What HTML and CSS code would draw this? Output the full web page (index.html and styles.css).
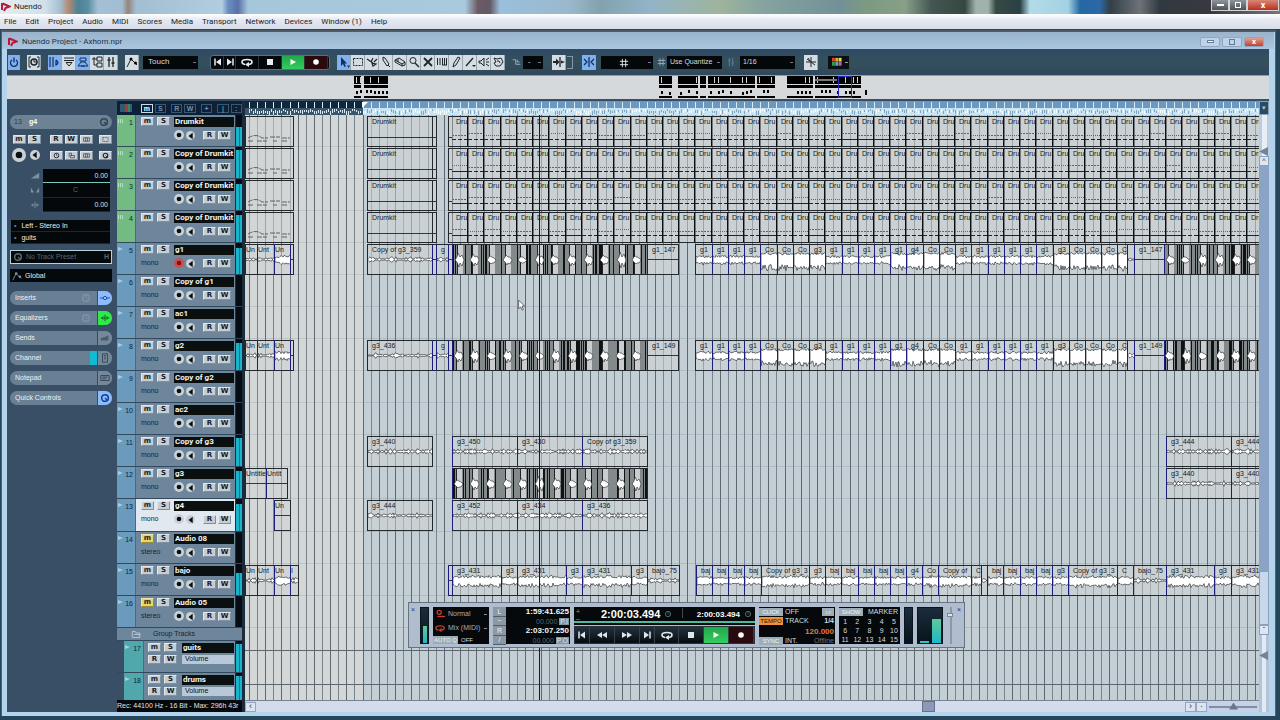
FILE: index.html
```html
<!DOCTYPE html>
<html lang="en">
<head>
<meta charset="utf-8">
<title>Nuendo</title>
<link rel="stylesheet" href="styles.css">
</head>
<body>
<svg class="sprite" aria-hidden="true">
  <symbol id="logo" viewBox="0 0 10 10"><path d="M1 1v7M1.500 1.500l7 3-4 1.500-1.500 3" fill="none" stroke="#b8183c" stroke-width="2"/></symbol>
  <symbol id="power" viewBox="0 0 12 12"><path d="M4 4a3.500 3.500 0 1 0 4 0M6 1.500v5" fill="none" stroke="currentColor" stroke-width="1.300"/></symbol>
  <symbol id="clock" viewBox="0 0 12 12"><path d="M3 1H1v10h2M9 1h2v10H9" fill="none" stroke="currentColor"/><circle cx="6" cy="6" r="3" fill="none" stroke="currentColor" stroke-width="1.500"/><path d="M6 4v2h2" fill="none" stroke="currentColor"/></symbol>
  <symbol id="inspector" viewBox="0 0 12 12"><path d="M1 1v10M4 1v10M7 4v5q4-2 0-5" fill="none" stroke="currentColor" stroke-width="1.200"/></symbol>
  <symbol id="info" viewBox="0 0 12 12"><path d="M1 2h10M1 4.500h10M3 6.500h6L6 10z" fill="none" stroke="currentColor"/></symbol>
  <symbol id="over" viewBox="0 0 12 12"><path d="M3 2h6v3H3zM1 10l3-4h4l3 4zM4 10h4" fill="none" stroke="currentColor"/></symbol>
  <symbol id="pool" viewBox="0 0 12 12"><path d="M6 1h5v4H6zM6 7h5v4H6zM3 1v8h3M1 3h5" fill="none" stroke="currentColor"/></symbol>
  <symbol id="mixer" viewBox="0 0 12 12"><path d="M4 1v10M8 1v10M2.500 4h3M6.500 7h3" fill="none" stroke="currentColor" stroke-width="1.300"/></symbol>
  <symbol id="auto" viewBox="0 0 12 12"><path d="M1 11L5 3l6 6" fill="none" stroke="currentColor"/><circle cx="5" cy="3" r="1.500"/><circle cx="9.500" cy="7" r="1.500"/></symbol>
  <symbol id="prev" viewBox="0 0 12 12"><path d="M3 2.500v7" stroke="currentColor" stroke-width="1.500"/><path d="M9 2.500v7L4 6z" fill="currentColor"/></symbol>
  <symbol id="next" viewBox="0 0 12 12"><path d="M9 2.500v7" stroke="currentColor" stroke-width="1.500"/><path d="M3 2.500v7L8 6z" fill="currentColor"/></symbol>
  <symbol id="rew" viewBox="0 0 12 12"><path d="M6 3v6L1 6zM11 3v6L6 6z" fill="currentColor"/></symbol>
  <symbol id="fwd" viewBox="0 0 12 12"><path d="M1 3v6l5-3zM6 3v6l5-3z" fill="currentColor"/></symbol>
  <symbol id="loop" viewBox="0 0 12 12"><path d="M4 8.500Q1 8 1 6q0-2.500 5-2.500T11 6q0 2-3 2.500" fill="none" stroke="currentColor" stroke-width="1.600"/><path d="M4 8.500l4-2.500v5z" fill="currentColor"/></symbol>
  <symbol id="stop" viewBox="0 0 12 12"><path d="M3 3h6v6H3z" fill="currentColor"/></symbol>
  <symbol id="play" viewBox="0 0 12 12"><path d="M3.500 3v6L9 6z" fill="currentColor"/></symbol>
  <symbol id="rec" viewBox="0 0 12 12"><circle cx="6" cy="6" r="2.800" fill="currentColor"/></symbol>
  <symbol id="arrow" viewBox="0 0 12 12"><path d="M3 1v9l2-2 1.500 3 1.500-.700L6.500 7.500H9z" fill="currentColor"/><path d="M9 9.500h3L10.500 12z" fill="currentColor"/></symbol>
  <symbol id="range" viewBox="0 0 12 12"><path d="M1.500 2.500h9v7h-9z" fill="none" stroke="currentColor" stroke-dasharray="2 1"/></symbol>
  <symbol id="split" viewBox="0 0 12 12"><path d="M1 3l6 4M7 2L5 6M6 7l4 1-3 2zM8 6l3-3" fill="none" stroke="currentColor" stroke-width="1.200"/></symbol>
  <symbol id="glue" viewBox="0 0 12 12"><path d="M3 1l2 1 4 6-2 2-4-6zM8 9l2 2" fill="none" stroke="currentColor"/></symbol>
  <symbol id="eraser" viewBox="0 0 12 12"><path d="M1 4l4-2 6 4v3l-3 1-7-4zM1 4l7 4 3-2M8 8v2M4 3v3" fill="none" stroke="currentColor"/></symbol>
  <symbol id="zoom" viewBox="0 0 12 12"><circle cx="5" cy="4.500" r="3" fill="none" stroke="currentColor"/><path d="M7 7l4 4" stroke="currentColor" stroke-width="1.500"/></symbol>
  <symbol id="mute" viewBox="0 0 12 12"><path d="M2 2l8 8M10 2l-8 8" stroke="currentColor" stroke-width="1.800"/></symbol>
  <symbol id="warp" viewBox="0 0 12 12"><path d="M1.500 2v7M4 2v7M6.500 2v7M8.500 2v7M10.500 2v7M6 9h5" stroke="currentColor"/></symbol>
  <symbol id="pencil" viewBox="0 0 12 12"><path d="M8 1l2 1-4 7-3 2 1-4z" fill="none" stroke="currentColor"/></symbol>
  <symbol id="line" viewBox="0 0 12 12"><path d="M2 10l7-8" stroke="currentColor" stroke-width="1.300"/><path d="M8 9h4l-2 2z" fill="currentColor"/></symbol>
  <symbol id="speaker" viewBox="0 0 12 12"><path d="M1 5h2l3-3v8L3 7H1zM8 4l3-2M8 6h3M8 8l3 2" fill="none" stroke="currentColor"/></symbol>
  <symbol id="palette" viewBox="0 0 12 12"><path d="M2 2l3 1 4-1 2 4-3 4H4L2 7l2-1zM5 5h2l1 2" fill="none" stroke="currentColor"/></symbol>
  <symbol id="snap" viewBox="0 0 12 12"><path d="M1 3h4v6h6M7 3v3h3" fill="none" stroke="currentColor" stroke-width="1.200"/></symbol>
  <symbol id="scroll" viewBox="0 0 12 12"><path d="M0 5h3V2.500L6.500 6 3 9.500V7H0z" fill="currentColor"/><path d="M7 1v10" stroke="currentColor" stroke-width="1.300"/><path d="M8 4.500L12 6 8 7.500z" fill="currentColor"/></symbol>
  <symbol id="magnet" viewBox="0 0 12 12"><path d="M6 1v10M1 3l3 3-3 3M11 3L8 6l3 3" fill="none" stroke="currentColor" stroke-width="1.300"/></symbol>
  <symbol id="zero" viewBox="0 0 12 12"><path d="M6 1v10M1 6h10M2 3l8 6M3 2l2 3" fill="none" stroke="currentColor"/></symbol>
  <symbol id="grid" viewBox="0 0 12 12"><path d="M4 1v10M8 1v10M1 4h10M1 8h10" stroke="currentColor"/></symbol>
  <symbol id="pal" viewBox="0 0 12 12"><path d="M0 1h3.500v4.500H0z" fill="#d8462a"/><path d="M4 1h3.500v4.500H4z" fill="#e8a830"/><path d="M8 1h3.500v4.500H8z" fill="#e8dc40"/><path d="M0 6h3.500v4.500H0z" fill="#3a9a48"/><path d="M4 6h3.500v4.500H4z" fill="#48b0d8"/><path d="M8 6h3.500v4.500H8z" fill="#c85a9a"/></symbol>
  <symbol id="mon" viewBox="0 0 12 12"><path d="M8 2v8L3 6z" fill="currentColor"/></symbol>
  <symbol id="ring" viewBox="0 0 12 12"><circle cx="6" cy="6" r="4" fill="none" stroke="currentColor" stroke-width="1.500"/><path d="M6 3v3l2 1" fill="none" stroke="currentColor"/></symbol>
  <symbol id="lock" viewBox="0 0 12 12"><path d="M4 6h7v4H4zM2 8V2h4v4" fill="none" stroke="currentColor"/></symbol>
  <symbol id="lanes" viewBox="0 0 12 12"><path d="M1 3h10v6H1zM4.500 3v6M7.500 3v6" fill="none" stroke="currentColor"/></symbol>
  <symbol id="insert" viewBox="0 0 12 12"><path d="M0 6h12" stroke="currentColor"/><circle cx="6" cy="6" r="2" fill="#9cc4ff" stroke="currentColor"/></symbol>
  <symbol id="eq" viewBox="0 0 12 12"><path d="M1 6h10M6 2v8M4 4q-3 2 0 4M8 4q3 2 0 4" fill="none" stroke="currentColor"/></symbol>
  <symbol id="knob" viewBox="0 0 12 12"><circle cx="6" cy="6" r="4" fill="none" stroke="currentColor" stroke-width="1.800"/><path d="M6 6l3 3" stroke="currentColor" stroke-width="1.500"/></symbol>
  <symbol id="recmode" viewBox="0 0 12 12"><circle cx="5" cy="4" r="2.500" fill="none" stroke="currentColor" stroke-width="1.500"/><path d="M3 9h9" stroke="currentColor" stroke-width="1.500"/></symbol>
  <symbol id="notes" viewBox="0 0 12 12"><path d="M1 3h10v6H1zM3 5h6M3 7h4" fill="none" stroke="currentColor"/></symbol>
  <symbol id="folder" viewBox="0 0 12 12"><path d="M1 2h4l1 2h5v6H1zM3 6h9" fill="none" stroke="currentColor" stroke-width="1.300"/></symbol>
  <symbol id="sends" viewBox="0 0 12 12"><path d="M1 9V6l4-1 5-2v6z" fill="currentColor" opacity=".6"/></symbol>
  <symbol id="strip" viewBox="0 0 12 12"><path d="M3 1h6v10H3zM5 3h2M5 5h2M5 7h2" fill="none" stroke="currentColor"/></symbol>
  <symbol id="vol" viewBox="0 0 12 12"><path d="M1 9L11 2v7z" fill="currentColor"/></symbol>
  <symbol id="pan" viewBox="0 0 12 12"><path d="M1 3v6h4zM11 3v6H7z" fill="currentColor"/></symbol>
</svg>

<header class="app-title">
  <svg class="logo"><use href="#logo"/></svg><span class="app-name">Nuendo</span>
  <div class="app-buttons">
    <button aria-label="Minimize"><i class="min"></i></button><button aria-label="Restore"><i class="max"></i></button><button class="close" aria-label="Close">x</button>
  </div>
</header>
<nav class="menubar">
  <button>File</button><button>Edit</button><button>Project</button><button>Audio</button><button>MIDI</button><button>Scores</button><button>Media</button><button>Transport</button><button>Network</button><button>Devices</button><button>Window (1)</button><button>Help</button>
</nav>

<section class="window">
  <header class="window-title">
    <svg class="logo"><use href="#logo"/></svg><h1>Nuendo Project - Axhom.npr</h1>
    <div class="window-buttons">
      <button aria-label="Minimize project"><i class="min"></i></button><button aria-label="Maximize project"><i class="max"></i></button><button class="close" aria-label="Close project">x</button>
    </div>
  </header>

  <div class="toolbar">
    <div class="group"><button class="tool on small" aria-label="Activate project"><svg><use href="#power"/></svg></button></div>
    <div class="group"><button class="tool" aria-label="Constrain delay"><svg><use href="#clock"/></svg></button></div>
    <div class="group">
      <button class="tool on" aria-label="Inspector"><svg><use href="#inspector"/></svg></button><button class="tool" aria-label="Info line"><svg><use href="#info"/></svg></button><button class="tool on" aria-label="Overview"><svg><use href="#over"/></svg></button><button class="tool" aria-label="Pool"><svg><use href="#pool"/></svg></button><button class="tool" aria-label="Mixer"><svg><use href="#mixer"/></svg></button>
    </div>
    <div class="group divided">
      <button class="tool" aria-label="Automation panel"><svg><use href="#auto"/></svg></button>
      <select class="drop mode" aria-label="Automation mode"><option>Touch</option></select>
    </div>
    <div class="group play-group">
      <button aria-label="Previous"><svg><use href="#prev"/></svg></button><button aria-label="Next"><svg><use href="#next"/></svg></button><button class="wide" aria-label="Cycle"><svg><use href="#loop"/></svg></button><button class="wide" aria-label="Stop"><svg><use href="#stop"/></svg></button><button class="wide green" aria-label="Play"><svg><use href="#play"/></svg></button><button class="wide red" aria-label="Record"><svg><use href="#rec"/></svg></button>
    </div>
    <div class="group">
      <button class="tool on" aria-label="Select"><svg><use href="#arrow"/></svg></button><button class="tool" aria-label="Range"><svg><use href="#range"/></svg></button><button class="tool" aria-label="Split"><svg><use href="#split"/></svg></button><button class="tool" aria-label="Glue"><svg><use href="#glue"/></svg></button><button class="tool" aria-label="Erase"><svg><use href="#eraser"/></svg></button><button class="tool" aria-label="Zoom"><svg><use href="#zoom"/></svg></button><button class="tool" aria-label="Mute"><svg><use href="#mute"/></svg></button><button class="tool" aria-label="Time warp"><svg><use href="#warp"/></svg></button><button class="tool" aria-label="Draw"><svg><use href="#pencil"/></svg></button><button class="tool" aria-label="Line"><svg><use href="#line"/></svg></button><button class="tool" aria-label="Play tool"><svg><use href="#speaker"/></svg></button><button class="tool" aria-label="Color tool"><svg><use href="#palette"/></svg></button>
    </div>
    <div class="group dim">
      <svg><use href="#snap"/></svg><select class="drop tiny" aria-label="Nudge"><option>-</option></select>
    </div>
    <div class="group divided follow"><button class="tool" aria-label="Autoscroll"><svg><use href="#scroll"/></svg></button><span class="bracket"></span></div>
    <div class="group">
      <button class="tool on" aria-label="Snap"><svg><use href="#magnet"/></svg></button>
      <span class="drop-icon"><select class="drop gridtype" aria-label="Snap type"><option></option></select><svg><use href="#grid"/></svg></span>
      <svg class="pale"><use href="#grid"/></svg>
      <select class="drop quant" aria-label="Grid type"><option>Use Quantize</option></select>
      <svg class="faint"><use href="#mixer"/></svg>
      <select class="drop quant" aria-label="Quantize"><option>1/16</option></select>
    </div>
    <div class="group after"><button class="tool" aria-label="Snap to zero"><svg><use href="#zero"/></svg></button></div>
    <div class="group"><button class="colors" aria-label="Colors"><svg><use href="#pal"/></svg><i></i></button></div>
  </div>

  <svg class="overview" id="overview"></svg>

  <div class="main">
    <aside class="inspector">
      <div class="track-head"><span>13</span><strong>g4</strong><svg><use href="#knob"/></svg></div>
      <div class="keys">
        <button class="key">m</button><button class="key">S</button><i></i><button class="key">R</button><button class="key">W</button><button class="key" aria-label="Edit channel"><svg><use href="#lanes"/></svg></button><i></i><button class="key" aria-label="Fades"><svg><use href="#range"/></svg></button>
        <button class="round big" aria-label="Record enable"><svg><use href="#rec"/></svg></button><button class="round mid" aria-label="Monitor"><svg><use href="#mon"/></svg></button><i></i><button class="key" aria-label="Timebase"><svg><use href="#ring"/></svg></button><button class="key" aria-label="Lock"><svg><use href="#lock"/></svg></button><button class="key" aria-label="Lanes"><svg><use href="#lanes"/></svg></button><i></i><button class="key" aria-label="Stereo"><svg><use href="#knob"/></svg></button>
      </div>
      <div class="levels">
        <div class="level-icons"><svg><use href="#vol"/></svg><svg><use href="#pan"/></svg><svg><use href="#eq"/></svg></div>
        <div class="level-box"><output class="volume">0.00</output><output class="center">C</output><output>0.00</output></div>
      </div>
      <div class="routing"><span><b>•</b>Left - Stereo In</span><span><b>•</b>guits</span></div>
      <button class="preset"><svg><use href="#knob"/></svg><span>No Track Preset</span><b>H</b></button>
      <button class="global"><svg><use href="#auto"/></svg><span>Global</span></button>
      <div class="sections">
        <button><span>Inserts</span><svg class="bypass"><use href="#ring"/></svg><em class="blue"><svg><use href="#insert"/></svg></em></button>
        <button><span>Equalizers</span><svg class="bypass"><use href="#ring"/></svg><em class="lime"><svg><use href="#eq"/></svg></em></button>
        <button><span>Sends</span><em><svg><use href="#sends"/></svg></em></button>
        <button><span>Channel</span><i></i><em><svg><use href="#strip"/></svg></em></button>
        <button><span>Notepad</span><em><svg><use href="#notes"/></svg></em></button>
        <button><span>Quick Controls</span><em class="blue"><svg><use href="#knob"/></svg></em></button>
      </div>
    </aside>

    <section class="tracks">
      <div class="tracks-head"><i class="rgb"></i><b class="lit">m</b><b>S</b><b class="gap">R</b><b>W</b><b class="gap">+</b><b class="gap">|</b><b>:</b></div>
      <div class="track-list" id="tracks"></div>
      <div class="status">Rec: 44100 Hz - 16 Bit - Max: 296h 43r</div>
    </section>

    <section class="arrange">
      <svg class="ruler" id="ruler"></svg>
      <div class="canvas">
        <svg class="lines" id="lines"></svg>
        <div class="lanes" id="lanes-area"></div>
        <i class="playhead"></i>
        <svg class="pointer" viewBox="0 0 12 18"><path d="M1 1v13l3-3 2 5 2-1-2-5h4z" fill="#fff" stroke="#333"/></svg>

        <section class="transport">
          <div class="end">×</div>
          <div class="meter"><i class="m60"></i></div>
          <div class="panel record-mode">
            <span><svg class="red-icon"><use href="#recmode"/></svg>Normal<b class="caret"></b></span>
            <span><svg class="red-icon"><use href="#loop"/></svg>Mix (MIDI)<b class="caret"></b></span>
            <span class="autoq"><button>AUTO Q</button>OFF</span>
          </div>
          <div class="locators">
            <button>L</button><output>1:59:41.625</output>
            <button>~</button><span>00.000 <b>P.I</b></span>
            <button>R</button><output>2:03:07.250</output>
            <button>/</button><span>00.000 <b>P.O</b></span>
          </div>
          <div class="center-block">
            <div class="display"><small>+<br>–</small><output>2:00:03.494</output><svg><use href="#ring"/></svg><i></i><output class="second">2:00:03.494</output><svg><use href="#ring"/></svg></div>
            <div class="buttons">
              <button aria-label="To start"><svg><use href="#prev"/></svg></button><button class="wide" aria-label="Rewind"><svg><use href="#rew"/></svg></button><button class="wide" aria-label="Forward"><svg><use href="#fwd"/></svg></button><button aria-label="To end"><svg><use href="#next"/></svg></button><button class="wide" aria-label="Cycle on"><svg><use href="#loop"/></svg></button><button class="wide" aria-label="Stop playback"><svg><use href="#stop"/></svg></button><button class="wide green" aria-label="Start playback"><svg><use href="#play"/></svg></button><button class="wide red" aria-label="Start recording"><svg><use href="#rec"/></svg></button>
            </div>
          </div>
          <div class="panel tempo">
            <button>CLICK</button><span>OFF</span><b class="chip">♪♪</b>
            <button class="orange">TEMPO</button><span>TRACK</span><b>1/4</b>
            <output>120.000</output>
            <button>SYNC</button><span>INT.</span><span class="off">Offline</span>
          </div>
          <div class="panel markers">
            <button class="show">SHOW</button><span class="caption">MARKER</span>
            <button>1</button><button>2</button><button>3</button><button>4</button><button>5</button><button>6</button><button>7</button><button>8</button><button>9</button><button>10</button><button>11</button><button>12</button><button>13</button><button>14</button><button>15</button>
          </div>
          <div class="meter"></div>
          <div class="meter double"><i class="m5"></i><i class="m80"></i></div>
          <div class="fader"><i></i></div>
          <div class="end right">×</div>
        </section>
      </div>
      <div class="hscroll">
        <button aria-label="Scroll left">‹</button><div class="rail"><i></i></div><button aria-label="Scroll right">›</button><button aria-label="Zoom menu">·</button><div class="zoomer"><i></i></div>
      </div>
    </section>

    <div class="vscroll">
      <button class="menu" aria-label="Ruler menu">▾</button><div class="wave-zoom"><i></i></div><button aria-label="Scroll up">^</button><div class="vrail"></div><div class="vthumb"></div><button aria-label="Scroll down">ˇ</button><div class="track-zoom"><i></i></div>
    </div>
  </div>
</section>
<script src="app.js"></script>
</body>
</html>
```
FILE: styles.css
```css
* { box-sizing: border-box; }
body { margin: 0; height: 100vh; display: flex; flex-direction: column; background: #24455a; color: #111; font: 7px/8px "Liberation Sans", Arial, sans-serif; overflow: hidden; }
button, select { font: inherit; color: inherit; border: 0; padding: 0; margin: 0; background: none; border-radius: 0; }
i, em { font-style: normal; display: block; }
svg { display: block; flex: none; }
.sprite { position: absolute; width: 0; height: 0; }
.logo { width: 10px; height: 10px; }

.app-title { height: 14px; flex: none; display: flex; align-items: center; gap: 3px; padding-left: 1px; font: 8px/12px Roboto, sans-serif; color: #222;
  background: linear-gradient(90deg, #e3edf2 0, #d2e0ea 45px, #a4c0d4 60px, #b98c74 68px, #4a8298 78px, #5a8ea2 88px, #a5c0d6 98px, #a2bdd1 122px, #96847c 128px, #a2bed2 136px, #b2cde0 222px, #6a8fc0 228px, #5a70a8 238px, #a6c6da 248px, #a9c9df 465px, #6a5a64 478px, #655968 490px, #9ac0dc 500px, #9ab8cc 570px, #82a2ae 600px, #93b4c8 650px, #9fb49c 720px, #86a4a0 760px, #739098 840px, #7c9a80 865px, #87a088 905px, #445552 932px, #344840 965px, #9fb2ac 976px, #9fb2ac 988px, #354944 996px, #2b4046 1020px, #b2dbe8 1030px, #a4d2e2 1068px, #2468a4 1080px, #2c68a4 1100px, #323f45 1110px, #6d7278 1140px, #30393f 1160px, #38393f 1210px, #777 1280px); }
.app-buttons { display: flex; margin-left: auto; align-self: flex-start; padding-right: 1px; }
.app-buttons button { width: 18px; height: 11px; border: 1px solid #d2d4d6; border-top: 0; background: linear-gradient(#8e9499, #4c5359); display: flex; align-items: center; justify-content: center; color: #fff; }
.app-buttons .close { width: 32px; background: linear-gradient(#d88878, #b83020); font: bold 9px/9px Roboto, sans-serif; }
.min { width: 7px; height: 2px; background: #fff; }
.max { width: 6px; height: 6px; border: 1px solid #fff; }
.menubar { height: 15px; flex: none; display: flex; gap: 9px; padding: 0 4px; align-items: center; font: 8px/12px Roboto, sans-serif; color: #1c1c1c; background: linear-gradient(#fff, #e4e8f1 40%, #d8deea); white-space: nowrap; }

.window { flex: 1; min-height: 0; display: flex; flex-direction: column; margin: 1px 4px 4px 1px; padding: 0 6px 4px 5px; background: #b4d4ee; border: 1px solid #4c6478; border-top: 2px solid #4e5c68; border-bottom: 0; }
.window-title { height: 17px; flex: none; margin: 0 -5px; padding: 2px 10px 0 6px; display: flex; align-items: center; gap: 4px; background: linear-gradient(#9ab3cb, #aac6e0); }
.window-title h1 { margin: 0; font: 8px/12px Roboto, sans-serif; color: #22303c; }
.window-buttons { display: flex; gap: 2px; margin-left: auto; }
.window-buttons button { width: 20px; height: 10px; border: 1px solid #8fa8c0; border-radius: 2px; background: #bed2e8; display: flex; align-items: center; justify-content: center; color: #fff; font: bold 8px/8px Roboto, sans-serif; }
.window-buttons .close { background: linear-gradient(#e0a090, #c04030); }
.window-buttons .min { border: 1px solid #667c92; height: 3px; }
.window-buttons .max { border-color: #667c92; }

.toolbar { height: 26px; flex: none; display: flex; align-items: center; gap: 7px; padding: 0 1px; background: linear-gradient(#304a64, #34505c 50%, #30485c); }
.group { display: flex; align-items: center; flex: none; }
.divided { gap: 4px; }
.tool { width: 14px; height: 15px; background: #d6dde2; border-right: 1px solid #9aa6ae; color: #1d262c; display: grid; place-items: center; }
.tool svg { width: 12px; height: 12px; }
.tool.on { background: #7fb0f0; color: #143060; }
.tool.small { width: 12px; }
.drop { appearance: none; height: 13px; background: #05080a; color: #d8dcde; padding: 0 5px; font: 8px/12px "Liberation Sans", Arial, sans-serif; background-image: linear-gradient(#778, #778); background-repeat: no-repeat; background-size: 3px 1px; background-position: right 2px center; }
.mode { width: 55px; }
.tiny { width: 20px; }
.gridtype { width: 52px; }
.quant { width: 55px; padding: 0 3px; }
.group > .quant { font-size: 7px; }
.group > .drop { flex: none; }
.drop-icon { position: relative; margin: 0 4px 0 5px; }
.drop-icon svg { position: absolute; left: 18px; top: 2px; width: 10px; height: 10px; color: #fff; pointer-events: none; }
.pale, .dim svg { width: 9px; height: 10px; color: #a8b8c4; margin-right: 1px; }
.faint { width: 10px; height: 10px; color: #60788a; margin: 0 4px; }
.dim { gap: 1px; margin-right: 2px; }
.follow { margin-right: 2px; }
.bracket { width: 6px; height: 13px; border: 1px solid #8698a6; border-left: 0; margin-left: -3px; }
.after { padding-left: 2px; margin-right: 3px; }
.play-group { background: #04080c; height: 15px; border: 1px solid #5a7080; border-radius: 3px; padding: 0 1px; margin-left: 5px; }
.play-group button { width: 12px; height: 13px; color: #e8ecee; display: grid; place-items: center; border-right: 1px solid #29333a; }
.play-group svg { width: 12px; height: 12px; }
.play-group .wide { width: 23px; }
.play-group .green, .buttons .green { background: linear-gradient(#20a848, #34cc60); color: #fff; }
.play-group .red, .buttons .red { background: #2a0a0c; color: #fff; }
.colors { width: 21px; height: 13px; background: #0a1014; display: flex; align-items: center; gap: 2px; padding-left: 3px; }
.colors svg { width: 12px; height: 10px; }
.colors i { width: 3px; height: 1px; background: #99a; }
.overview { width: 100%; height: 24px; background: #d5d9dc; border-top: 1px solid #8f9ba4; }

.main { flex: 1; min-height: 0; display: grid; grid-template-columns: 110px 128px 1fr 10px; grid-template-rows: minmax(0, 1fr); background: #384f66; padding-top: 2px; }
.inspector { padding: 14px 5px 0 3px; color: #e6ecf0; }
.inspector svg { width: 10px; height: 10px; }
.track-head { height: 14px; display: flex; align-items: center; gap: 5px; background: #6e8296; border-radius: 7px; padding: 0 3px 0 4px; }
.track-head span { color: #2c3c4a; width: 10px; }
.track-head strong { flex: 1; color: #fff; }
.track-head svg { color: #32444f; }
.keys { display: grid; grid-template-columns: 14px 15px 5px 14px 14px 14px 3px 14px; gap: 4px 1px; place-items: center; margin: 6px 0 7px 2px; }
.key { width: 13px; height: 9px; background: #c6ced4; color: #15202a; border: 1px solid #dde3e6; border-color: #e2e7ea #8090a0 #8090a0 #e2e7ea; border-radius: 1px; font: bold 7px/7px "DejaVu Sans", sans-serif; display: grid; place-items: center; }
.key svg { width: 9px; height: 7px; }
.round { width: 10px; height: 10px; border-radius: 50%; background: #c9d1d6; color: #0a0f12; display: grid; place-items: center; flex: none; }
.round svg { width: 10px; height: 10px; }
.round.armed { background: #c85050; color: #8c0c10; }
.round.big { width: 14px; height: 14px; }
.round.big svg { width: 14px; height: 14px; }
.levels { display: flex; justify-content: flex-end; gap: 3px; padding-right: 2px; }
.level-icons { display: grid; align-items: center; color: #7c90a0; }
.level-box { width: 67px; height: 43px; background: #04080a; display: grid; grid-template-rows: repeat(3, 1fr); color: #dde2e4; text-align: right; }
.level-box output { padding: 3px 2px 0 0; border-bottom: 1px solid #1d282e; }
.level-box .volume { border-bottom-color: #7cc8bc; }
.level-box .center { text-align: center; color: #5d6870; }
.routing { margin: 8px 2px 6px 1px; background: #04080a; }
.routing span { display: block; height: 12px; padding: 2px 3px; border-bottom: 1px solid #1c262c; }
.routing b { color: #718090; margin-right: 5px; }
.preset, .global { width: 100%; height: 14px; background: #04090c; display: flex; align-items: center; gap: 3px; padding: 0 2px; }
.preset { border: 1px solid #b7d2d8; color: #5b6870; }
.preset b { margin-left: auto; }
.global { margin: 5px 0 9px; height: 13px; }
.global svg { color: #8a98a0; fill: #8a98a0; }
.sections { display: grid; gap: 6px; }
.sections button { height: 14px; display: flex; align-items: center; border-radius: 7px; background: #697f94; overflow: hidden; padding-left: 5px; color: #eef2f4; }
.sections span { flex: 1; text-align: left; }
.sections em { width: 15px; align-self: stretch; display: grid; place-items: center; border-left: 1px solid #3a4c5c; background: #74889a; color: #2c3f50; }
.sections .blue { background: #8cbcfc; color: #123c90; }
.sections .lime { background: #30e848; color: #085020; }
.sections i { width: 7px; align-self: stretch; background: #10bcd4; }
.bypass { color: #8296a6; margin-right: 6px; }

.tracks { display: flex; flex-direction: column; min-width: 0; min-height: 0; padding-right: 3px; background: #1b2d3c; }
.tracks-head { height: 14px; background: #0c2038; display: flex; align-items: center; padding-left: 3px; gap: 2px; color: #7690a8; flex: none; }
.tracks-head b { width: 12px; height: 9px; border: 1px solid #3c566e; text-align: center; line-height: 7px; }
.tracks-head .lit { color: #fff; border-color: #cddae4; }
.tracks-head .gap { margin-left: 3px; }
.rgb { width: 13px; height: 8px; margin-right: 7px; background: linear-gradient(90deg, #34586c 5px, #a03c40 5px 8px, #388a50 8px 10px, #345c88 10px); }
.track-list { flex: 1; min-height: 0; overflow: hidden; }
.track { height: 32px; display: flex; border-bottom: 1px solid #33485a; background: #6e869c; }
.track.sel { height: 33px; }
.track .num { width: 19px; padding: 4px 2px 0 1px; display: flex; justify-content: space-between; background: #6a9abc; color: #123; border-right: 1px solid #50687c; }
.track .num::before { content: ""; width: 5px; height: 4px; background: #a8cce0; clip-path: polygon(0 0, 100% 50%, 0 100%); }
.track.midi .num { background: #72bc84; }
.track.midi .num::before { clip-path: none; background: repeating-linear-gradient(90deg, #b8e0c0 0 1px, transparent 1px 2px); }
.track .body { flex: 1; min-width: 0; padding: 2px 1px 0 5px; display: grid; grid-template-columns: 15px 16px 1fr; grid-template-rows: 10px 12px; gap: 2px 1px; }
.track.sel .body { background: #e2e8f0; }
.name { background: #0a100f; color: #f2f4f4; font: bold 8px/10px Roboto, Arial, sans-serif; padding-left: 1px; white-space: nowrap; overflow: hidden; }
.channels { grid-column: 1 / 3; padding-top: 2px; color: #16242e; }
.row-keys { display: flex; align-items: center; gap: 2px; }
.row-keys .round + .key { margin-left: 6px; }
.row-keys .mid { width: 9px; height: 9px; }
.key.muted { background: #e8d468; border-color: #f2e6a0 #9c8c3c #9c8c3c #f2e6a0; }
.level { width: 7px; background: #060c12; display: flex; flex-direction: column; justify-content: flex-end; border-left: 1px solid #1d303e; }
.level i { background: linear-gradient(90deg, #18b4cc 3px, #0c7c94 3px 4px, #18b4cc 4px); }
.folder { height: 13px; display: flex; align-items: center; gap: 12px; padding-left: 14px; background: #6e869c; border-bottom: 1px solid #33485a; color: #16242e; }
.folder svg { width: 10px; height: 9px; color: #b4c4d0; }
.track.group-track .num { margin-left: 7px; background: #50a8ac; width: 20px; }
.track.group-track { background: #6e869c linear-gradient(#384f66, #384f66) 0 0 / 7px 100% no-repeat; }
.track.group-track .body { grid-template-columns: 15px 17px 1fr; padding-left: 4px; grid-template-rows: 10px 10px; }
.field { height: 9px; background: #b8c8d8; padding-left: 3px; }
.status { height: 12px; background: #05080a; color: #e2e4e4; line-height: 12px; white-space: nowrap; flex: none; }

.arrange { display: flex; flex-direction: column; min-width: 0; min-height: 0; }
.ruler { width: 100%; height: 14px; background: #c9e4f2; flex: none; }
.canvas { position: relative; flex: 1; min-height: 0; background: linear-gradient(90deg, #d4d7d8 118px, #c3ced5 118px); overflow: hidden; }
.lines { position: absolute; inset: 0; width: 100%; height: 100%; }
.lanes { position: relative; }
.lane { position: relative; height: 32px; border-bottom: 1px solid rgba(120, 135, 145, .25); }
.lane.sel { height: 33px; }
.lane.folder-gap { height: 23px; border-bottom-color: #5b666e; }
.lane.bottom { height: 34px; border-bottom-color: #5b666e; }
.clip { position: absolute; top: 1px; height: 31px; border: 1px solid #22282c; background: rgba(208, 211, 214, .55); overflow: hidden; }
.clip.hit { border-right: 2px solid #0c0e10; border-left: 0; }
.clip.audio { border-left-color: #1c1c7c; }
.clip svg { position: absolute; left: 0; top: 0; width: 100%; height: 100%; }
.clip span { position: absolute; left: 4px; top: 1px; white-space: nowrap; color: #14181a; }
.clip.slim span { left: 0; }
.playhead { position: absolute; left: 294px; top: 0; bottom: 0; width: 1px; background: #181c20; }
.pointer { position: absolute; left: 273px; top: 184px; width: 8px; height: 13px; }

.transport { position: absolute; left: 163px; top: 487px; height: 46px; width: 557px; padding: 4px 2px 3px; display: flex; gap: 4px; background: #b0bdce; border: 1px solid #66727e; color: #d6dcde; }
.end { width: 8px; color: #334; line-height: 6px; }
.end.right { margin-left: auto; }
.meter { width: 9px; background: linear-gradient(#1c2c3c, #07141c); border: 1px solid #0a141c; display: flex; align-items: flex-end; justify-content: center; gap: 3px; flex: none; }
.meter i { width: 4px; background: linear-gradient(#5fc898, #20b8c8); }
.m60 { height: 50%; } .m5 { height: 6%; } .m80 { height: 70%; }
.meter.double { width: 26px; }
.meter.double i { width: 9px; }
.panel { background: #05090c; }
.record-mode { width: 56px; display: grid; grid-template-rows: 14px 14px 10px; flex: none; }
.record-mode span { display: flex; align-items: center; gap: 3px; padding: 0 2px; color: #a8b0b4; white-space: nowrap; }
.record-mode .autoq { padding: 0; color: #d8dcde; font-size: 6px; }
.red-icon { width: 10px; height: 10px; color: #c84030; }
.caret { width: 3px; height: 1px; background: #889; margin-left: auto; }
.record-mode button, .tempo button, .markers .show, .chip { background: #9eacb6; color: #eef3f6; height: 8px; line-height: 8px; text-align: center; font-weight: normal; font-size: 6px; }
.record-mode button { width: 25px; }
.locators { width: 77px; display: grid; grid-template-columns: 13px 1fr; grid-auto-rows: 1fr; background: #05090c; flex: none; text-align: right; padding-right: 1px; }
.locators button { background: #8a99a4; color: #eef2f4; border-bottom: 1px solid #52606a; text-align: center; }
.locators output { font: bold 8px/10px "Liberation Sans", Arial, sans-serif; color: #f4f6f6; }
.locators span { color: #5a666e; line-height: 9px; }
.locators b { background: #8494a0; color: #dfe6ea; font-weight: normal; padding: 0 1px; }
.center-block { width: 181px; display: flex; flex-direction: column; justify-content: space-between; flex: none; }
.display { height: 18px; background: linear-gradient(#05090c 14px, #50b89c 14px 16px, #05090c 16px); display: flex; gap: 4px; padding: 1px 3px 0 2px; color: #fff; }
.display small { font: 7px/7px "Liberation Sans", sans-serif; color: #8a9aa4; width: 21px; }
.display output { font: bold 11px/13px "Liberation Sans", Arial, sans-serif; }
.display .second { font-size: 8px; margin-left: auto; }
.display i { width: 1px; height: 10px; background: #445; margin-left: 6px; }
.display svg { width: 8px; height: 12px; color: #52666e; }
.buttons { height: 18px; display: flex; background: #0c141a; border: 1px solid #26333c; }
.buttons button { width: 15px; color: #dfe6ea; display: grid; place-items: center; border-right: 1px solid #33424c; background: linear-gradient(#24323c, #060c10); }
.buttons .wide { flex: 1; }
.buttons svg { width: 12px; height: 12px; }
.tempo { width: 76px; display: grid; grid-template-columns: 24px 1fr 20px; grid-template-rows: 9px 10px 10px 9px; column-gap: 2px; align-items: center; flex: none; padding-right: 1px; }
.tempo .orange { background: #f0923c; color: #2a1404; }
.tempo b { text-align: right; }
.tempo .chip { width: 12px; justify-self: end; text-align: center; }
.tempo output { grid-column: 1 / 4; text-align: right; color: #e87838; font: bold 8px/9px "Liberation Sans", Arial, sans-serif; }
.tempo .off { color: #68737a; text-align: right; margin-left: -6px; }
.markers { width: 61px; display: grid; grid-template-columns: repeat(5, 1fr); grid-template-rows: 10px repeat(3, 1fr); align-items: center; flex: none; }
.markers .show { grid-column: 1 / 3; }
.markers .caption { grid-column: 3 / 6; text-align: right; padding-right: 2px; }
.fader { width: 8px; display: flex; justify-content: center; background: linear-gradient(90deg, transparent 3px, #8c98a8 3px 5px, transparent 5px); }
.fader i { width: 6px; height: 4px; background: #dce4ee; border: 1px solid #7a8898; margin-top: 6px; }

.hscroll { height: 12px; display: flex; align-items: center; background: #c6d0e6; border-top: 1px solid #78858e; flex: none; color: #26323e; }
.hscroll button { width: 11px; height: 10px; font-size: 9px; border: 1px solid #96a6c0; background: #dce4f2; line-height: 7px; }
.rail { flex: 1; height: 100%; background: #d4dbed; }
.rail i { width: 13px; height: 100%; margin-left: calc(71% + 6px); background: #8d97b8; border: 1px solid #65708e; }
.zoomer { width: 48px; height: 2px; background: #7f8da2; margin: 0 2px; }
.zoomer i { width: 9px; height: 7px; margin: -3px 0 0 20px; background: #68778c; clip-path: polygon(50% 0, 100% 100%, 0 100%); }
.vscroll { display: flex; flex-direction: column; background: #bccbe0; min-height: 0; color: #203040; }
.vscroll button { height: 10px; border: 1px solid #90a0ba; background: #dce6f4; line-height: 8px; flex: none; }
.vscroll .menu { height: 14px; background: #294b62; color: #a7c8dc; }
.wave-zoom { height: 41px; background: linear-gradient(90deg, transparent 3px, #e8eef6 3px 8px, transparent 8px); display: flex; align-items: flex-end; flex: none; }
.wave-zoom i, .track-zoom i { width: 9px; height: 9px; background: #71849c; clip-path: polygon(0 50%, 100% 0, 100% 100%); }
.vrail { flex: 1; background: #8ba3c4; }
.vthumb { height: 54px; background: #c8d8ec; border: 1px solid #8ca0bc; flex: none; }
.track-zoom { height: 77px; background: linear-gradient(90deg, #b4c4d8 3px, #e2eaf4 3px 7px, #b4c4d8 7px); padding-top: 16px; flex: none; }
```
FILE: app.js
```js
const BEAT = 16.23;
const LEFT = 245;
let seed = 7;
const rnd = () => (seed = (seed * 16807) % 2147483647) / 2147483647;
const rect = (x, y, w, h, fill) => `<rect x="${x}" y="${y}" width="${w}" height="${h}" fill="${fill}"/>`;

/* Track list */
const tracks = [
  ['Drumkit', 'midi', 60], ['Copy of Drumkit', 'midi', 90], ['Copy of Drumkit', 'midi', 85], ['Copy of Drumkit', 'midi', 88],
  ['g1', 'mono', 85], ['Copy of g1', 'mono', 0], ['ac1', 'mono', 0], ['g2', 'mono', 88], ['Copy of g2', 'mono', 0], ['ac2', 'mono', 0],
  ['Copy of g3', 'mono', 90], ['g3', 'mono', 86], ['g4', 'mono', 85], ['Audio 08', 'stereo', 0], ['bajo', 'mono', 70], ['Audio 05', 'stereo', 0]
];
const icon = id => `<svg><use href="#${id}"/></svg>`;
let html = '';
tracks.forEach(([name, kind, level], i) => {
  const midi = kind === 'midi';
  html += `<div class="track ${midi ? 'midi' : ''} ${name === 'g4' ? 'sel' : ''}"><div class="num">${i + 1}</div><div class="body">
    <button class="key ${kind === 'stereo' ? 'muted' : ''}">m</button><button class="key">S</button><div class="name">${name}</div>
    <div class="channels">${midi ? '' : kind}</div>
    <div class="row-keys"><button class="round ${name === 'g1' ? 'armed' : ''}" aria-label="Record">${icon('rec')}</button><button class="round mid" aria-label="Monitor">${icon('mon')}</button><button class="key">R</button><button class="key">W</button></div>
  </div><div class="level"><i style="height:${level}%"></i></div></div>`;
});
html += `<div class="folder">${icon('folder')}<span>Group Tracks</span></div>`;
['guits', 'drums'].forEach((name, i) => {
  html += `<div class="track group-track"><div class="num">${17 + i}</div><div class="body">
    <button class="key">m</button><button class="key">S</button><div class="name">${name}</div>
    <button class="key">R</button><button class="key">W</button><div class="field">Volume</div>
  </div><div class="level"><i style="height:90%"></i></div></div>`;
});
document.getElementById('tracks').innerHTML = html;

/* Bar lines and ruler ticks */
let lines = '', ticks = rect(0, 0, 118, 7, '#10283c') + rect(118, 0, 4000, 7, '#6c98c0') + rect(0, 7, 118, 7, '#39566c');
for (let n = 0; n < 480; n++) {
  const x = Math.round(4 + n * BEAT / 2);
  lines += rect(x, 0, 1, '100%', n % 2 ? '#78838a' : '#5e696f');
  ticks += rect(x, 1, 1, 6, '#d9ecf6');
  for (let k = 0; k < 4; k++) {
    ticks += rect(x + k * 2, 8 + Math.floor(rnd() * 3), 1, 2 + Math.floor(rnd() * 3), n < 14 ? '#dceaf2' : (rnd() > .5 ? '#7fa6c2' : '#ffffff'));
  }
}
ticks += '<path d="M117 1h6l-6 6z" fill="#fff"/>';
document.getElementById('lines').innerHTML = lines;
document.getElementById('ruler').innerHTML = ticks;

/* Waveform drawing */
function wave(w, amp, low) {
  let top = [], bottom = [];
  for (let x = 0; x <= w; x += 1) {
    const pulse = amp > 5 ? .75 + rnd() * .45 : amp > 2 ? .45 + rnd() * .6 : .15 + Math.pow(rnd(), 2) * 1.3;
    top.push(`${x},${(14.5 - amp * pulse).toFixed(1)}`);
    bottom.unshift(`${x},${(14.5 + amp * (pulse + rnd() * low)).toFixed(1)}`);
  }
  return `<polygon points="${top.join(' ')} ${bottom.join(' ')}" fill="#fff" stroke="#1c2024" stroke-width=".6"/>`;
}
function dense(w) {
  let s = rect(0, 0, w, 31, '#84898b');
  for (let x = 0; x < w; x += 2) if (rnd() > .45) s += rect(x, 0, rnd() > .75 ? 2 : 1, 31, '#101214');
  for (let b = 5; b < w; b += BEAT) {
    const x = Math.round(b - 3 + rnd() * 2);
    const h = 3 + Math.round(rnd() * 5);
    s += rect(x, 0, 6, 31, '#c9cdcf') + rect(x, 0, 1, 31, '#222');
    s += `<polygon points="${x - 2},15 ${x},12 ${x + 1},${15 - h} ${x + 3},12 ${x + 5},${17 - h} ${x + 7},15 ${x + 5},${14 + h} ${x + 3},18 ${x + 2},${15 + h} ${x},17" fill="#fff" stroke="#222" stroke-width=".6"/>`;
  }
  return s;
}
function drum(w, kind) {
  if (kind === 'long') return rect(0, 20, w, 1, '#30363a');
  if (kind === 'intro') return '<path d="M2 21q8-5 14 0h6m2-1h10m2 1h8M2 24h5m4 0h10m6 0h4m5 0h6" fill="none" stroke="#444" stroke-width=".8" stroke-dasharray="5 1"/>';
  const y = rnd() > .75 ? 16 : 18;
  return `<path d="M0 ${y}.500h${w}" stroke="#666" stroke-dasharray="${rnd() > .4 ? '2 1' : '1 1'}"/><path d="M0 22.500h${w}" stroke="#222" stroke-dasharray="${rnd() > .6 ? 40 : '4 2'}"/>`;
}

/* Clips: [start, end, label, kind] */
const at = n => Math.round(452 + n * BEAT);
const drums = [[245, 293, '', 'intro'], [367, 432, 'Drumkit', 'long'], [432, 436, '', 'long'], [448, 452, '', 'long']];
for (let n = 0; n < 50; n++) drums.push([at(n), at(n + 1), 'Dru', 'hit']);

const names = 'g1 g1 g1 g1 Co Co Co g3 g1 g1 g1 g1 g1 g4 Co Co g1 g1 g1 g1 g1 g1 g3 Co Co Co'.split(' ');
function guitar(first, tail) {
  const list = [[245, 257, 'Un', 'thin'], [257, 274, 'Unt', 'thin'], [274, 290, 'Un', 'mid'], [290, 293, '', 'flat'],
    [367, 432, first, 'thin'], [432, 436, '', 'flat'], [436, 448, 'g', 'thin'], [448, 452, '', 'flat'],
    [452, 647, '', 'dense'], [647, 678, tail, 'flat']];
  names.forEach((name, i) => list.push([at(15 + i), at(16 + i), name, name[0] === 'C' || name === 'g3' || i === 12 || i === 13 ? 'big' : 'mid']));
  list.push([1117, 1127, 'C', 'big'], [1127, 1134, '', 'thin'], [1134, 1164, tail, 'flat'], [1164, 1640, '', 'dense']);
  return list;
}
const bass = [[245, 257, 'Un', 'thin'], [257, 274, 'Unt', 'thin'], [274, 290, 'Un', 'mid'], [290, 298, 'I', 'thin'], [448, 452, '', 'flat'],
  [452, 501, 'g3_431', 'loud'], [501, 517, 'g3', 'mid'], [517, 566, 'g3_431', 'loud'], [566, 582, 'g3', 'mid'], [582, 631, 'g3_431', 'loud'], [631, 647, 'g3', 'mid'], [647, 679, 'bajo_75', 'thin'],
  [696, 712, 'baj', 'mid'], [712, 728, 'baj', 'mid'], [728, 744, 'baj', 'mid'], [744, 761, 'baj', 'mid'], [761, 809, 'Copy of g3_3', 'loud'], [809, 825, 'g3', 'mid'],
  [825, 841, 'baj', 'mid'], [841, 858, 'baj', 'mid'], [858, 874, 'baj', 'mid'], [874, 890, 'baj', 'mid'], [890, 906, 'baj', 'mid'], [906, 922, 'g4', 'mid'], [922, 938, 'Co', 'loud'], [938, 971, 'Copy of', 'loud'], [971, 981, 'C', 'mid'], [981, 987, '', 'thin'],
  [987, 1003, 'baj', 'mid'], [1003, 1020, 'baj', 'mid'], [1020, 1036, 'baj', 'mid'], [1036, 1052, 'baj', 'mid'], [1052, 1068, 'g3', 'mid'], [1068, 1117, 'Copy of g3_3', 'loud'], [1117, 1133, 'C', 'mid'], [1133, 1166, 'bajo_75', 'thin'],
  [1166, 1214, 'g3_431', 'loud'], [1214, 1231, 'g3', 'mid'], [1231, 1280, 'g3_431', 'loud']];
const lanes = [drums, drums, drums, drums, guitar('Copy of g3_359', 'g1_147'), [], [], guitar('g3_436', 'g1_149'), [], [],
  [[367, 432, 'g3_440', 'thin'], [452, 517, 'g3_450', 'thin'], [517, 582, 'g3_430', 'thin'], [582, 647, 'Copy of g3_359', 'thin'], [1166, 1231, 'g3_444', 'thin'], [1231, 1296, 'g3_444', 'thin']],
  [[245, 266, 'Untitle', 'flat'], [266, 287, 'Untit', 'flat'], [452, 647, '', 'dense'], [1166, 1231, 'g3_440', 'thin'], [1231, 1296, 'g3_440', 'thin']],
  [[274, 290, 'Un', 'flat'], [367, 432, 'g3_444', 'thin'], [452, 517, 'g3_452', 'thin'], [517, 582, 'g3_434', 'thin'], [582, 647, 'g3_436', 'thin']],
  [], bass, []];

function art(kind, w) {
  if (kind === 'dense') return dense(w);
  if (kind === 'thin') return wave(w, 2, 0);
  if (kind === 'mid') return wave(w, 4, .4);
  if (kind === 'loud') return wave(w, 5, .5);
  if (kind === 'big') return wave(w, 6, .8);
  if (kind === 'flat') return rect(0, 14, w, 1, '#30363a');
  return drum(w, kind);
}
let area = '';
lanes.forEach((clips, i) => {
  area += `<div class="lane ${i === 12 ? 'sel' : ''}">`;
  clips.forEach(([a, b, label, kind]) => {
    const w = b - a + 1;
    area += `<div class="clip ${i > 3 ? 'audio' : ''} ${a < 300 ? 'slim' : ''} ${kind === 'hit' ? 'hit' : ''}" style="left:${a - LEFT}px;width:${w}px"><svg>${art(kind, w)}</svg>${label ? `<span>${label}</span>` : ''}</div>`;
  });
  area += '</div>';
});
area += '<div class="lane folder-gap"></div><div class="lane bottom"></div>';
document.getElementById('lanes-area').innerHTML = area;

/* Project overview */
let o = '';
[[347, 7], [357, 24], [652, 13], [671, 20], [693, 6], [701, 47], [750, 18], [780, 26], [808, 46]].forEach(([x, w]) => {
  o += rect(x, 0, w, 8, '#000') + rect(x, 9, w, 3, '#000') + rect(x, 20, w, 2, '#000');
  for (let k = 2; k < w; k += 4) {
    if (rnd() > .5) o += rect(x + k, 1, 1, 6, '#cfd3d6');
    if (rnd() > .3) o += rect(x + k, 14 + Math.round(rnd() * 2), 2, 3, '#000');
  }
});
o += rect(808, 3, 22, 2, '#777') + rect(858, 14, 2, 5, '#000') + '<rect x="831.500" y=".500" width="13" height="21" fill="none" stroke="#2a2ac0"/>';
document.getElementById('overview').innerHTML = o;
```
